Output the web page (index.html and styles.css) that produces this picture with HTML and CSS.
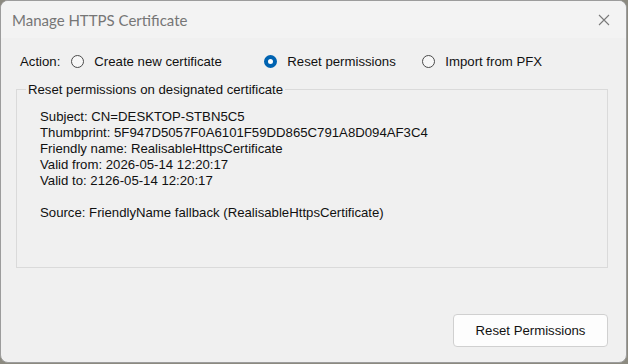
FILE: index.html
```html
<!DOCTYPE html>
<html lang="en">
<head>
    <meta charset="UTF-8">
    <title>Manage HTTPS Certificate</title>
    <link rel="stylesheet" href="styles.css">
</head>
<body>
    <div class="window">
        <div class="titlebar">
            <span class="title">Manage HTTPS Certificate</span>
            <svg class="close" width="12" height="12" viewBox="0 0 12 12">
                <path d="M1 1 L11 11 M11 1 L1 11" stroke="#7a7a7a" stroke-width="1.1" fill="none"/>
            </svg>
        </div>
        <div class="content">
            <div class="action-row">
                <span class="label">Action:</span>
                <label class="radio radio-create"><span class="dot"></span>Create new certificate</label>
                <label class="radio radio-reset checked"><span class="dot"></span>Reset permissions</label>
                <label class="radio"><span class="dot"></span>Import from PFX</label>
            </div>
            <fieldset class="group">
                <legend>Reset permissions on designated certificate</legend>
                <div class="info">
                    <div>Subject: CN=DESKTOP-STBN5C5</div>
                    <div>Thumbprint: 5F947D5057F0A6101F59DD865C791A8D094AF3C4</div>
                    <div>Friendly name: RealisableHttpsCertificate</div>
                    <div>Valid from: 2026-05-14 12:20:17</div>
                    <div>Valid to: 2126-05-14 12:20:17</div>
                    <div class="blank"></div>
                    <div>Source: FriendlyName fallback (RealisableHttpsCertificate)</div>
                </div>
            </fieldset>
            <div class="buttons">
                <button class="btn">Reset Permissions</button>
            </div>
        </div>
    </div>
</body>
</html>
```

FILE: styles.css
```css
body {
    margin: 0;
    background: #8c8a80;
    font-family: "Liberation Sans", Arial, sans-serif;
}

.window {
    width: 625px;
    height: 361px;
    background: #f0f0f0;
    border: 1px solid #9c9c9c;
    border-radius: 8px;
    overflow: hidden;
}

.titlebar {
    height: 37px;
    display: flex;
    align-items: center;
    justify-content: space-between;
    padding: 0 16px 0 11px;
    background: #f3f3f3;
}

.title {
    font-family: Lato, sans-serif;
    font-size: 15px;
    color: #767676;
}

.content {
    padding: 0 18px 0 15px;
    font-size: 13.2px;
    color: #111;
}

.action-row {
    display: flex;
    align-items: center;
    height: 24px;
    margin-top: 11px;
    padding-left: 4px;
}

.label {
    margin-right: 11px;
}

.radio {
    display: flex;
    align-items: center;
}

.radio-create {
    width: 193px;
}

.radio-reset {
    width: 158px;
}

.dot {
    width: 11px;
    height: 11px;
    border: 1px solid #4a4a4a;
    border-radius: 50%;
    background: #f7f7f7;
    margin-right: 10px;
    box-sizing: content-box;
}

.radio.checked .dot {
    width: 5px;
    height: 5px;
    border: 4px solid #0063b1;
    background: #fff;
}

.group {
    margin: 9px 0 0 0;
    padding: 10px 0 0 0;
    height: 174px;
    border: 1px solid #dadada;
}

.group legend {
    padding: 0 2px;
    margin-left: 9px;
}

.info {
    padding: 2px 0 0 23px;
    line-height: 16px;
}

.blank {
    height: 16px;
}

.buttons {
    display: flex;
    justify-content: flex-end;
    margin-top: 46px;
}

.btn {
    width: 155px;
    height: 33px;
    background: #fdfdfd;
    border: 1px solid #d0d0d0;
    border-radius: 4px;
    font-family: "Liberation Sans", Arial, sans-serif;
    font-size: 13.2px;
    color: #111;
}
```
